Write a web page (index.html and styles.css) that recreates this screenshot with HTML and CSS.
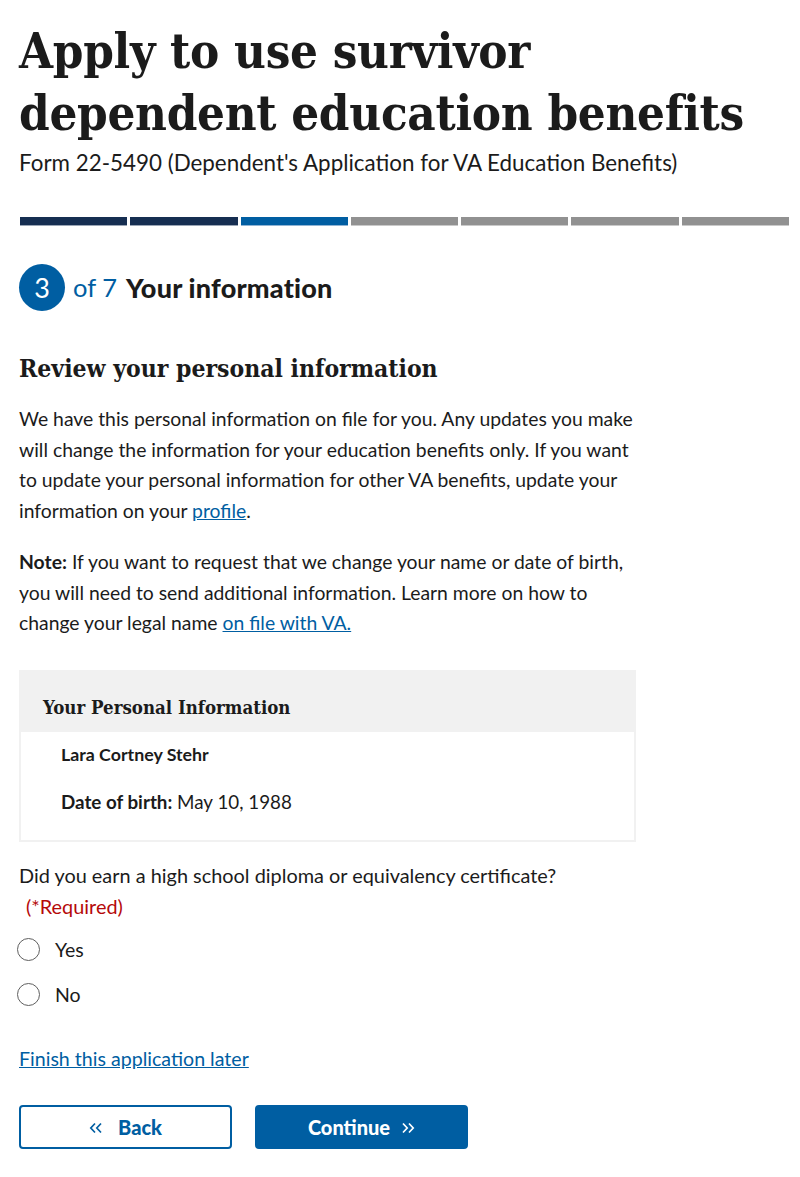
FILE: index.html
```html
<!DOCTYPE html>
<html lang="en">
<head>
<meta charset="utf-8">
<title>Apply to use survivor dependent education benefits</title>
<link rel="stylesheet" href="styles.css">
</head>
<body>
<main class="page">
  <h1 class="title">Apply to use survivor dependent education benefits</h1>
  <p class="subtitle">Form 22-5490 (Dependent's Application for VA Education Benefits)</p>

  <div class="progress">
    <span class="seg done"></span>
    <span class="seg done"></span>
    <span class="seg current"></span>
    <span class="seg"></span>
    <span class="seg"></span>
    <span class="seg"></span>
    <span class="seg"></span>
  </div>

  <h2 class="step">
    <span class="step-num">3</span>
    <span class="step-of">of 7</span>
    <span class="step-name">Your information</span>
  </h2>

  <div class="content">
    <h3 class="section-title">Review your personal information</h3>
    <p class="text">We have this personal information on file for you. Any updates you make will change the information for your education benefits only. If you want to update your personal information for other VA benefits, update your information on your <a href="#">profile</a>.</p>
    <p class="text"><strong>Note:</strong> If you want to request that we change your name or date of birth, you will need to send additional information. Learn more on how to change your legal name <a href="#">on file with VA.</a></p>

    <div class="card">
      <div class="card-head">Your Personal Information</div>
      <div class="card-body">
        <p class="card-name">Lara Cortney Stehr</p>
        <p class="card-dob"><strong>Date of birth:</strong> May 10, 1988</p>
      </div>
    </div>

    <fieldset class="question">
      <legend class="q-label">Did you earn a high school diploma or equivalency certificate?<span class="req">(*Required)</span></legend>
      <label class="radio"><input type="radio" name="hs"><span class="radio-circle"></span><span>Yes</span></label>
      <label class="radio"><input type="radio" name="hs"><span class="radio-circle"></span><span>No</span></label>
    </fieldset>

    <a class="finish" href="#">Finish this application later</a>

    <div class="actions">
      <button class="btn btn-back" type="button">
        <svg class="chev" viewBox="0 0 14 12" width="14" height="12" aria-hidden="true"><path d="M6 1.5 1.8 6 6 10.5M12 1.5 7.8 6 12 10.5" fill="none" stroke="currentColor" stroke-width="1.7"/></svg>
        <span>Back</span>
      </button>
      <button class="btn btn-continue" type="button">
        <span>Continue</span>
        <svg class="chev" viewBox="0 0 14 12" width="14" height="12" aria-hidden="true"><path d="M2 1.5 6.2 6 2 10.5M8 1.5 12.2 6 8 10.5" fill="none" stroke="currentColor" stroke-width="1.7"/></svg>
      </button>
    </div>
  </div>
</main>
</body>
</html>
```

FILE: styles.css
```css
* { box-sizing: border-box; }

body {
  margin: 0;
  background: #ffffff;
  color: #1b1b1b;
  font-family: "Lato", "Noto Sans", sans-serif;
}

.page {
  padding: 20px 11px 28px 19px;
}

.title {
  max-width: 755px;
  margin: 0;
  font-family: "DejaVu Serif Condensed", "DejaVu Serif", serif;
  font-stretch: condensed;
  font-weight: bold;
  font-size: 48.8px;
  line-height: 62px;
  letter-spacing: -0.3px;
  color: #1b1b1b;
}

.subtitle {
  margin: 4px 0 0;
  font-size: 22.4px;
  line-height: 30px;
}

.progress {
  display: flex;
  gap: 3px;
  margin: 39px 0 0 1px;
}

.seg {
  flex: 1;
  height: 9px;
  background: #919191;
  border-bottom: 1px solid #c9c9c9;
}
.seg.done { background: #162e51; border-bottom-color: #9aa5b5; }
.seg.current { background: #005ea2; border-bottom-color: #8fb3d3; }

.step {
  display: flex;
  align-items: center;
  margin: 38px 0 0;
  font-size: 26px;
  line-height: 47px;
}

.step-num {
  width: 46px;
  height: 47px;
  border-radius: 50%;
  background: #005ea2;
  color: #ffffff;
  font-weight: normal;
  display: flex;
  align-items: center;
  justify-content: center;
  font-size: 27px;
}

.step-of {
  margin-left: 8px;
  color: #005ea2;
  font-weight: normal;
  font-size: 25.5px;
}

.step-name {
  margin-left: 9px;
  font-weight: 900;
  font-size: 27px;
  letter-spacing: 0.2px;
}

.content {
  width: 617px;
}

.section-title {
  margin: 43px 0 0;
  font-family: "DejaVu Serif Condensed", "DejaVu Serif", serif;
  font-stretch: condensed;
  font-weight: bold;
  font-size: 24.5px;
  line-height: 30px;
}

.text {
  margin: 20px 0 0;
  font-size: 19.35px;
  line-height: 30.7px;
}

a { color: #005ea2; text-decoration: underline; }

.card {
  margin-top: 31px;
  border: 2px solid #f1f1f1;
}

.card-head {
  background: #f1f1f1;
  padding: 21px 22px 9px;
  font-family: "DejaVu Serif Condensed", "DejaVu Serif", serif;
  font-stretch: condensed;
  font-weight: bold;
  font-size: 18.5px;
  line-height: 30px;
}

.card-body {
  padding: 7px 40px 23px;
}

.card-name {
  margin: 0;
  font-weight: bold;
  font-size: 17.8px;
  line-height: 30px;
}

.card-dob {
  margin: 18px 0 0;
  font-size: 18.8px;
  line-height: 30px;
}

.question {
  margin: 18px 0 0;
  padding: 0;
  border: 0;
  min-width: 0;
}

.q-label {
  padding: 0;
  font-size: 19.9px;
  line-height: 31px;
}

.req {
  display: block;
  margin-left: 7px;
  color: #b50909;
}

.radio {
  display: flex;
  align-items: center;
  height: 45px;
  font-size: 19.5px;
}
.radio:first-of-type { margin-top: 5px; }

.radio input {
  position: absolute;
  opacity: 0;
  width: 0;
  height: 0;
}

.radio-circle {
  width: 23px;
  height: 23px;
  border-radius: 50%;
  border: 1.5px solid #5f5f5f;
  margin: 0 15px 0 -2px;
  flex: none;
}

.finish {
  display: inline-block;
  margin-top: 27px;
  font-size: 19.6px;
  line-height: 30px;
}

.actions {
  display: flex;
  gap: 23px;
  margin-top: 31px;
}

.btn {
  display: flex;
  align-items: center;
  justify-content: center;
  width: 213px;
  height: 44px;
  border-radius: 4px;
  font-family: "Lato", "Noto Sans", sans-serif;
  font-weight: 900;
  font-size: 20px;
  cursor: pointer;
}

.btn-back {
  gap: 15px;
  background: #ffffff;
  color: #005ea2;
  border: 2px solid #005ea2;
}

.btn-continue {
  gap: 11px;
  background: #005ea2;
  color: #ffffff;
  border: 2px solid #005ea2;
}

.chev {
  flex: none;
  margin-top: 3px;
}
```
